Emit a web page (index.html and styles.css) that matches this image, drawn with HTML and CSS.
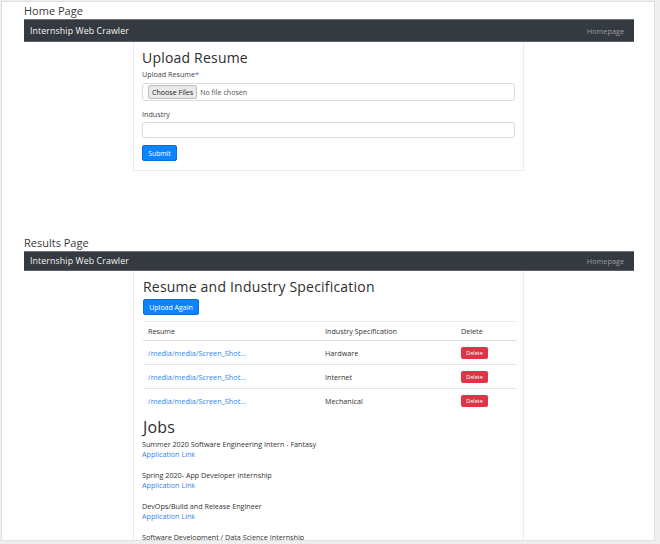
FILE: index.html
```html
<!DOCTYPE html>
<html>
<head>
<meta charset="utf-8">
<link rel="stylesheet" href="styles.css">
</head>
<body>
<div class="sheet">
  <section class="shot shot-home">
    <div class="caption">Home Page</div>
    <nav class="navbar nav-home">
      <span class="brand">Internship Web Crawler</span>
      <span class="navlink">Homepage</span>
    </nav>
    <div class="card card-home">
      <h1 class="title">Upload Resume</h1>
      <div class="label">Upload Resume<span class="req">*</span></div>
      <div class="filebox"><span class="filebtn">Choose Files</span><span class="filetext">No file chosen</span></div>
      <div class="label label-ind">Industry</div>
      <div class="textbox"></div>
      <span class="btn btn-blue btn-submit">Submit</span>
    </div>
  </section>

  <section class="shot shot-results">
    <div class="caption">Results Page</div>
    <nav class="navbar nav-results">
      <span class="brand">Internship Web Crawler</span>
      <span class="navlink">Homepage</span>
    </nav>
    <div class="card card-results">
      <h1 class="title">Resume and Industry Specification</h1>
      <span class="btn btn-blue btn-again">Upload Again</span>
      <div class="table">
        <div class="row head">
          <span class="c1">Resume</span><span class="c2">Industry Specification</span><span class="c3">Delete</span>
        </div>
        <div class="row">
          <span class="c1 link">/media/media/Screen_Shot...</span><span class="c2">Hardware</span><span class="c3"><span class="btn-del">Delete</span></span>
        </div>
        <div class="row">
          <span class="c1 link">/media/media/Screen_Shot...</span><span class="c2">Internet</span><span class="c3"><span class="btn-del">Delete</span></span>
        </div>
        <div class="row">
          <span class="c1 link">/media/media/Screen_Shot...</span><span class="c2">Mechanical</span><span class="c3"><span class="btn-del">Delete</span></span>
        </div>
      </div>
      <h2 class="title jobs-title">Jobs</h2>
      <div class="job"><div class="job-name">Summer 2020 Software Engineering Intern - Fantasy</div><div class="link">Application Link</div></div>
      <div class="job"><div class="job-name">Spring 2020- App Developer Internship</div><div class="link">Application Link</div></div>
      <div class="job"><div class="job-name">DevOps/Build and Release Engineer</div><div class="link">Application Link</div></div>
      <div class="job"><div class="job-name">Software Development / Data Science Internship</div><div class="link">Application Link</div></div>
    </div>
  </section>
</div>
</body>
</html>
```

FILE: styles.css
```css
* { box-sizing: border-box; }
html, body { margin: 0; padding: 0; }
body {
  background: #eeeeee;
  width: 660px;
  height: 544px;
  overflow: hidden;
  font-family: "Open Sans", "Liberation Sans", sans-serif;
}
.sheet {
  margin: 1px 0 0 1px;
  width: 654px;
  height: 540px;
  background: #ffffff;
  border: 1px solid #e0e0e0;
  overflow: hidden;
  padding: 0 20px 0 22px;
}
.caption {
  font-size: 11px;
  line-height: 16px;
  color: #3a3a3a;
  height: 16px;
  margin-top: 1px;
}
.navbar {
  background: #343a40;
  display: flex;
  justify-content: space-between;
  align-items: center;
  padding: 0 10px 0 6px;
  border-top: 1px solid #6c737a;
  border-bottom: 1px solid #5a6168;
}
.nav-home { height: 23px; }
.nav-results { height: 20px; }
.brand {
  color: #f4f4f4;
  font-size: 8.8px;
  font-weight: 500;
  letter-spacing: 0.1px;
}
.navlink {
  color: #9a9ea3;
  font-size: 7.3px;
}
.card {
  width: 391px;
  margin: 0 0 0 109px;
  background: #fff;
  border: 1px solid #ececec;
  border-top: none;
  padding: 6px 8px 8px 8px;
  display: flex;
  flex-direction: column;
  align-items: flex-start;
}
.card > * { flex-shrink: 0; }
.card-home { height: 129px; }
.title {
  font-size: 14px;
  font-weight: 400;
  color: #2e2e2e;
  margin: 0;
  line-height: 20px;
  letter-spacing: 0.2px;
}
.card-results .title { margin-left: 1px; }
.label {
  font-size: 7.2px;
  color: #444;
  line-height: 10px;
  margin-top: 1px;
}
.req { color: #4a55d8; }
.filebox {
  margin-top: 4px;
  width: 373px;
  height: 18px;
  border: 1px solid #dcdcdc;
  border-radius: 3px;
  display: flex;
  align-items: center;
  padding-left: 5px;
  font-size: 7.1px;
  color: #333;
}
.filebtn {
  background: #e9e9e9;
  border: 1px solid #bdbdbd;
  border-radius: 2px;
  padding: 1px 3px;
  line-height: 10px;
  color: #222;
}
.filetext { margin-left: 3px; color: #555; }
.label-ind { margin-top: 8px; }
.textbox {
  margin-top: 3px;
  width: 373px;
  height: 16px;
  border: 1px solid #dcdcdc;
  border-radius: 3px;
}
.btn {
  display: inline-flex;
  align-items: center;
  justify-content: center;
  border-radius: 2px;
  color: #fff;
  font-size: 6.8px;
}
.btn-blue { background: #0d84ff; border: 1px solid #0a6fdc; }
.btn-submit { margin-top: 7px; width: 35px; height: 16px; }
.btn-again { margin-top: 2px; margin-left: 1px; width: 56px; height: 16px; font-size: 7px; }

.shot-results { margin-top: 64px; }
.card-results { padding-top: 6px; }
.table {
  margin-top: 6px;
  margin-left: 1px;
  width: 374px;
  border-top: 1px solid #ececec;
  font-size: 7.2px;
  color: #333;
}
.row {
  display: flex;
  align-items: center;
  height: 24px;
  border-top: 1px solid #e6e6e6;
  padding-left: 5px;
}
.row.head { border-top: none; height: 19px; border-bottom: 1px solid #dedede; }
.row.head + .row { border-top: none; height: 23px; }
.c1 { width: 177px; }
.c2 { width: 136px; }
.c3 { flex: 1; }
.link { color: #2f86ee; }
.c1.link { font-size: 7.3px; }
.btn-del {
  display: inline-flex;
  align-items: center;
  justify-content: center;
  width: 27px;
  height: 12px;
  background: #dc3545;
  border-radius: 2px;
  color: #fff;
  font-size: 5.5px;
}
.jobs-title { margin-top: 6px; font-size: 16px; line-height: 18px; }
.job {
  font-size: 7.2px;
  line-height: 10px;
  color: #333;
  margin-top: 3px;
  margin-bottom: 11px;
}
.job + .job { margin-top: 0; }
```
